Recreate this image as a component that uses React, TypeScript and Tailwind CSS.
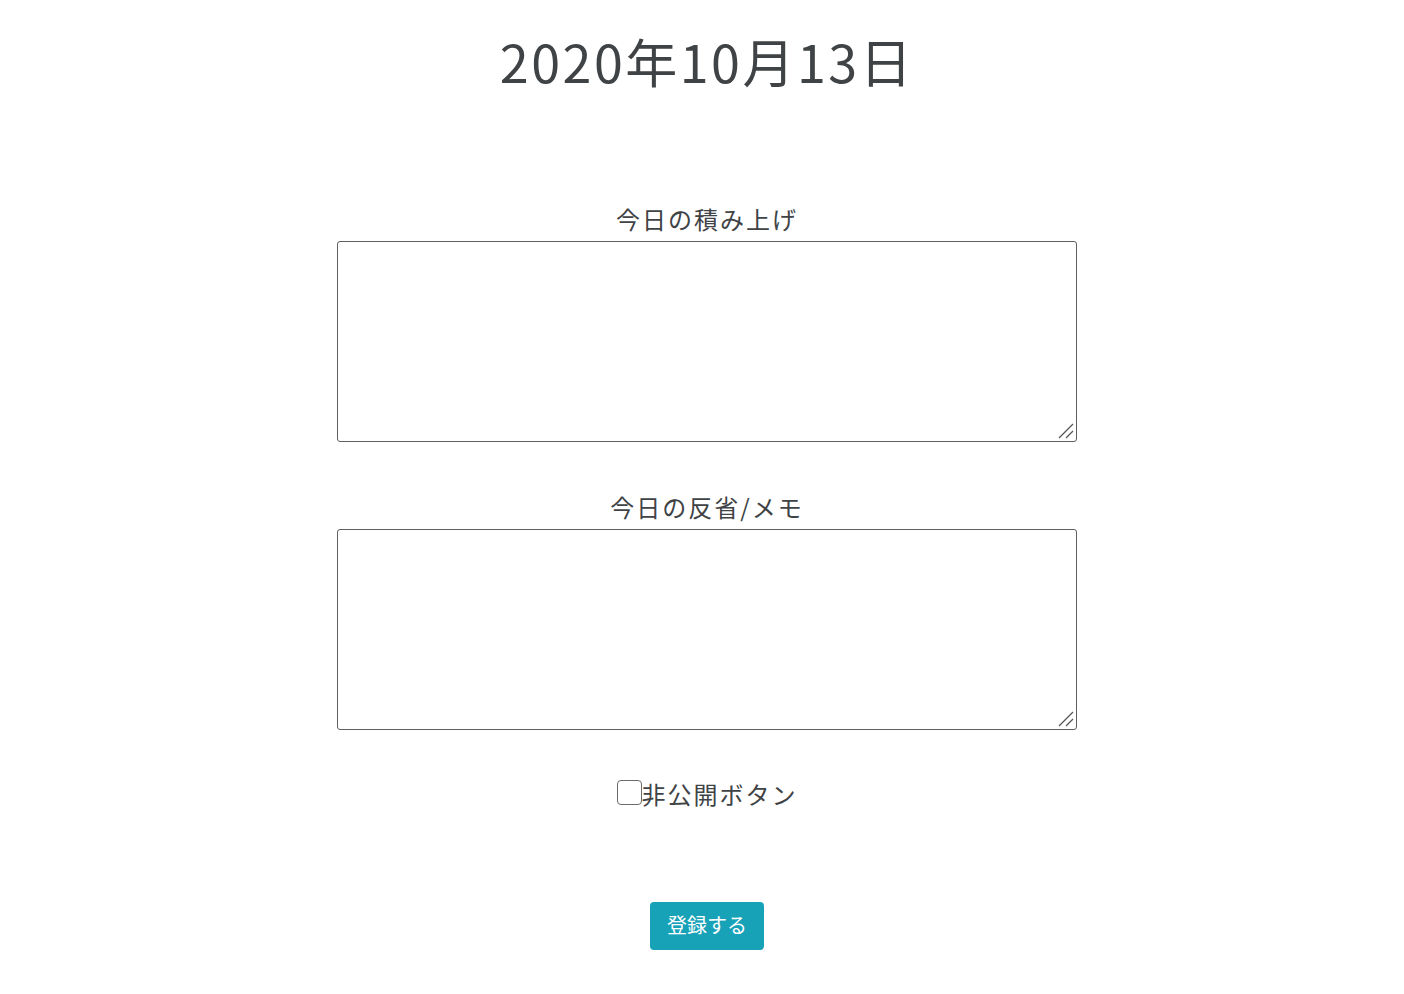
import React from "react";

const font = { fontFamily: '"Noto Sans CJK JP", "Noto Sans", sans-serif' };

function Area() {
  return (
    <div className="relative mt-[4px] w-[740px] h-[201px]">
      <textarea className="block w-full h-full border border-[#5f5f5f] rounded-[3px] bg-white resize-none" />
      <svg className="absolute right-[3px] bottom-[3px] pointer-events-none" width="16" height="16" viewBox="0 0 16 16">
        <line x1="1" y1="15" x2="15" y2="1" stroke="#555" strokeWidth="1.3" />
        <line x1="8" y1="15" x2="15" y2="8" stroke="#555" strokeWidth="1.3" />
      </svg>
    </div>
  );
}

export default function App() {
  return (
    <div className="min-h-[994px] bg-white text-[#404345] pl-[10px]" style={font}>
      <div className="flex flex-col items-center">
        <h1 className="mt-[19px] text-[52px] leading-[84px] tracking-[2.5px] font-normal">2020年10月13日</h1>
        <div className="mt-[98px] flex flex-col items-center">
          <label className="text-[24px] leading-[36px] tracking-[2px]">今日の積み上げ</label>
          <Area />
        </div>
        <div className="mt-[47px] flex flex-col items-center">
          <label className="text-[24px] leading-[36px] tracking-[2px]">今日の反省/メモ</label>
          <Area />
        </div>
        <label className="mt-[46px] flex items-center text-[24px] leading-[36px] tracking-[2px]">
          <input type="checkbox" className="appearance-none w-[25px] h-[25px] border-[1.5px] border-[#6b6b6b] rounded-[4px] bg-white -mt-[3px]" />
          <span>非公開ボタン</span>
        </label>
        <button className="mt-[90px] w-[114px] h-[48px] bg-[#17a2b8] text-white text-[20px] rounded-[4px] flex items-center justify-center pb-[3px]">
          登録する
        </button>
      </div>
    </div>
  );
}
